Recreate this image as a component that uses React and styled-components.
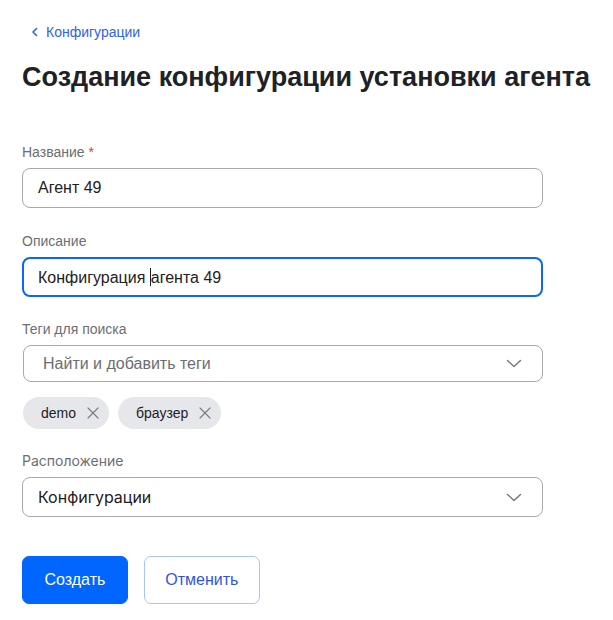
import React from "react";
import styled, { createGlobalStyle } from "styled-components";

const Global = createGlobalStyle`
  html, body { margin: 0; padding: 0; background: #fff; }
  body { font-family: "Liberation Sans", Arial, sans-serif; color: #1f2023; }
  * { box-sizing: border-box; }
`;

const Page = styled.div`
  padding: 22px 22px 0 22px;
  display: flex;
  flex-direction: column;
`;

const BackLink = styled.a`
  display: inline-flex;
  align-items: center;
  gap: 7px;
  margin-left: 9px;
  height: 20px;
  font-size: 14px;
  color: #2e62e8;
  text-decoration: none;
  align-self: flex-start;
`;

const Title = styled.h1`
  margin: 19px 0 0 0;
  font-size: 27px;
  line-height: 32px;
  font-weight: 700;
  color: #202124;
  white-space: nowrap;
`;

const Form = styled.div`
  margin-top: 51px;
  display: flex;
  flex-direction: column;
  width: 521px;
`;

const Field = styled.div`
  display: flex;
  flex-direction: column;
  margin-top: ${(p) => p.$mt ?? 25}px;
  font-family: ${(p) => (p.$inter ? `Inter, "Liberation Sans", sans-serif` : `"Liberation Sans", Arial, sans-serif`)};
`;

const Label = styled.label`
  font-size: 14px;
  line-height: 16px;
  color: #6b6e75;
  margin-bottom: 8px;
`;

const Req = styled.span`
  color: #e0344b;
`;

const Box = styled.div`
  height: ${(p) => p.$h || 40}px;
  border: ${(p) => (p.$focus ? "2px solid #0a66ff" : "1px solid #a7a9ae")};
  border-radius: 8px;
  display: flex;
  align-items: center;
  justify-content: space-between;
  padding: 0 ${(p) => (p.$focus ? 19 : 20)}px 0 ${(p) => (p.$focus ? 14 : p.$pl || 15)}px;
  margin-left: ${(p) => p.$ml || 0}px;
  font-size: 16px;
  color: ${(p) => (p.$placeholder ? "#6b6e75" : "#1f2023")};
  background: #fff;
`;

const Caret = styled.span`
  display: inline-block;
  width: 1px;
  height: 18px;
  background: #1f2023;
  vertical-align: -3px;
`;

const Chips = styled.div`
  display: flex;
  gap: 9px;
  margin-top: 15px;
  margin-left: 1px;
`;

const Chip = styled.div`
  height: 32px;
  border-radius: 16px;
  background: #e6e7ea;
  display: inline-flex;
  align-items: center;
  gap: 10px;
  padding: 0 9px 0 18px;
  font-size: 14px;
  color: #1f2023;
`;

const Buttons = styled.div`
  display: flex;
  gap: 16px;
  margin-top: 39px;
`;

const Button = styled.button`
  height: 48px;
  padding: 0 ${(p) => (p.$primary ? 21.5 : 20.5)}px;
  border-radius: 7px;
  font-family: "Liberation Sans", Arial, sans-serif;
  font-size: 16px;
  cursor: pointer;
  background: ${(p) => (p.$primary ? "#0066ff" : "#fff")};
  color: ${(p) => (p.$primary ? "#fff" : "#2f55e0")};
  border: 1px solid ${(p) => (p.$primary ? "#0066ff" : "#a9c3fb")};
`;

const ChevronLeft = () => (
  <svg width="8" height="10" viewBox="0 0 8 10" fill="none">
    <path d="M5.5 1.5L2 5l3.5 3.5" stroke="#2e62e8" strokeWidth="1.6" strokeLinecap="round" strokeLinejoin="round" />
  </svg>
);

const ChevronDown = () => (
  <svg width="16" height="9" viewBox="0 0 16 9" fill="none">
    <path d="M1.5 1.5L8 7.5l6.5-6" stroke="#6f7278" strokeWidth="1.3" strokeLinecap="round" strokeLinejoin="round" />
  </svg>
);

const Cross = () => (
  <svg width="14" height="14" viewBox="0 0 14 14" fill="none">
    <path d="M2 2l10 10M12 2L2 12" stroke="#7a7d83" strokeWidth="1.2" strokeLinecap="round" />
  </svg>
);

export default function App() {
  return (
    <>
      <Global />
      <Page>
        <BackLink href="#">
          <ChevronLeft />
          Конфигурации
        </BackLink>
        <Title>Создание конфигурации установки агента</Title>
        <Form>
          <Field $mt={0}>
            <Label>
              Название <Req>*</Req>
            </Label>
            <Box>Агент 49</Box>
          </Field>
          <Field>
            <Label>Описание</Label>
            <Box $focus>
              <span>
                Конфигурация <Caret />агента 49
              </span>
            </Box>
          </Field>
          <Field $mt={24}>
            <Label>Теги для поиска</Label>
            <Box $h={37} $ml={1} $pl={19} $placeholder>
              Найти и добавить теги
              <ChevronDown />
            </Box>
            <Chips>
              <Chip>
                demo
                <Cross />
              </Chip>
              <Chip>
                браузер
                <Cross />
              </Chip>
            </Chips>
          </Field>
          <Field $inter $mt={24}>
            <Label>Расположение</Label>
            <Box>
              Конфигурации
              <ChevronDown />
            </Box>
          </Field>
        </Form>
        <Buttons>
          <Button $primary>Создать</Button>
          <Button>Отменить</Button>
        </Buttons>
      </Page>
    </>
  );
}
